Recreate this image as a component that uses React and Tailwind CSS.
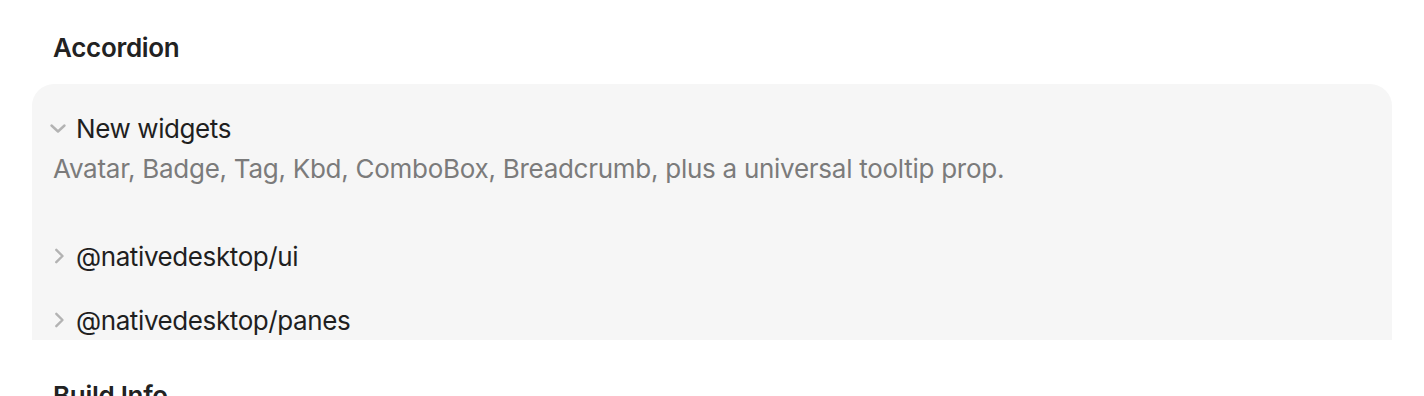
import React, { useState } from 'react';

const items = [
  {
    id: 'widgets',
    title: 'New widgets',
    body: 'Avatar, Badge, Tag, Kbd, ComboBox, Breadcrumb, plus a universal tooltip prop.',
  },
  { id: 'ui', title: '@nativedesktop/ui', body: 'Core primitives and layout components.' },
  { id: 'panes', title: '@nativedesktop/panes', body: 'Resizable split panes and docking.' },
];

const Chevron = ({ open }) => (
  <svg width="18" height="18" viewBox="0 0 18 18" className="shrink-0" fill="none">
    {open ? (
      <polyline points="2.5,5.5 9,11.5 15.5,5.5" stroke="#b3b3b3" strokeWidth="2.4" strokeLinecap="round" strokeLinejoin="round" />
    ) : (
      <polyline points="7.3,1.8 13.5,8 7.3,14.2" stroke="#b3b3b3" strokeWidth="2.4" strokeLinecap="round" strokeLinejoin="round" />
    )}
  </svg>
);

export default function App() {
  const [open, setOpen] = useState('widgets');

  return (
    <div className="min-h-screen bg-white px-[32px] pt-[32px] text-[26px] font-['Inter','Liberation_Sans',sans-serif]">
      <h2 className="ml-[21px] h-[32px] leading-[32px] font-semibold text-[#222222] tracking-[-0.3px]">Accordion</h2>

      <div className="mt-[20px] h-[256px] overflow-hidden rounded-t-[22px] bg-[#f6f6f6] pl-[17px] pt-[29px]">
        <div className="flex flex-col gap-[32px]">
          {items.map((item) => {
            const isOpen = open === item.id;
            return (
              <div key={item.id}>
                <button
                  onClick={() => setOpen(isOpen ? null : item.id)}
                  className="flex h-[32px] items-center gap-[9px] text-[#1f1f1f] leading-[32px]"
                >
                  <Chevron open={isOpen} />
                  <span className="tracking-[-0.4px]">{item.title}</span>
                </button>
                {isOpen && (
                  <p className="ml-[4px] mt-[8px] pb-[24px] leading-[32px] text-[#7b7b7b] tracking-[-0.27px]">
                    {item.body}
                  </p>
                )}
              </div>
            );
          })}
        </div>
      </div>

      <h2 className="ml-[21px] mt-[40px] h-[32px] leading-[32px] font-semibold text-[#222222] tracking-[-0.3px]">Build Info</h2>
    </div>
  );
}
